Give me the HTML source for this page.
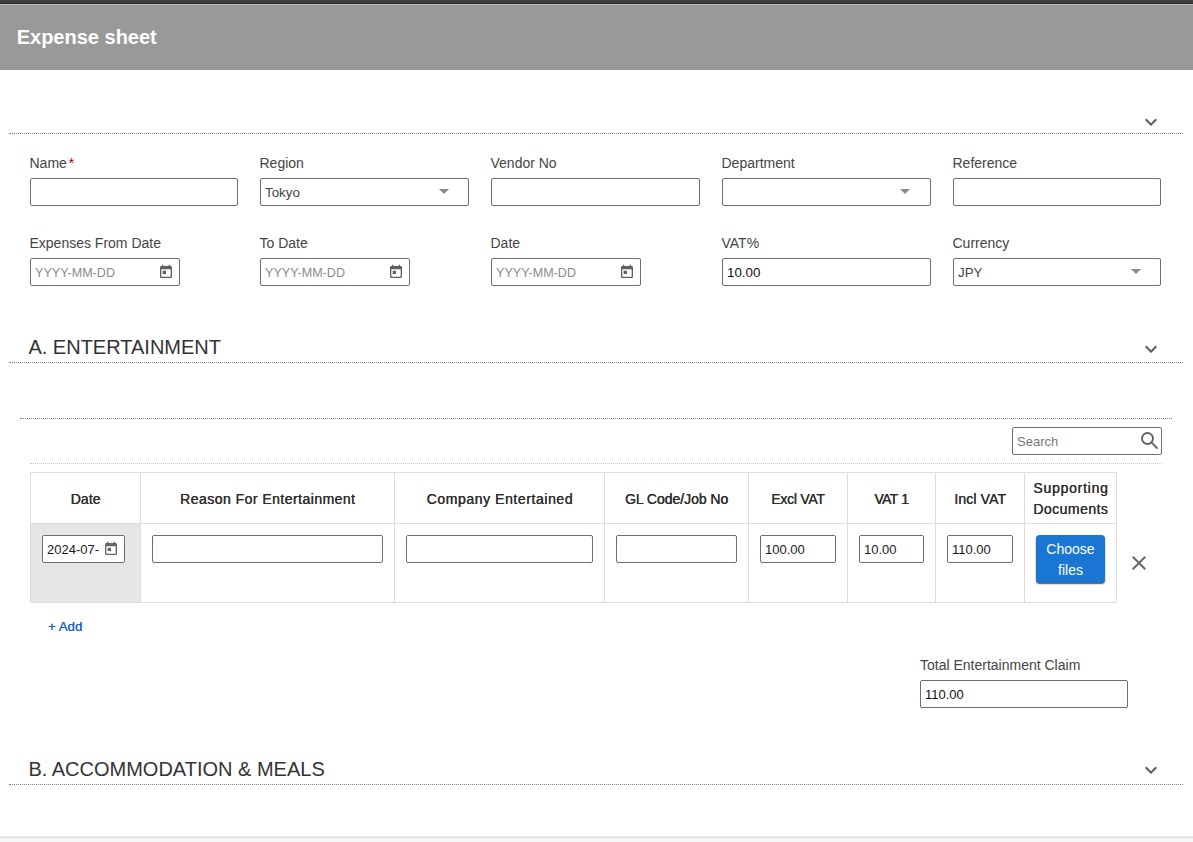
<!DOCTYPE html>
<html lang="en">
<head>
<meta charset="utf-8">
<title>Expense sheet</title>
<style>
*{box-sizing:border-box;}
html,body{margin:0;padding:0;}
body{width:1193px;height:842px;overflow:hidden;background:#fff;font-family:"Liberation Sans",sans-serif;font-size:14px;color:#444;position:relative;}
.topbar{position:absolute;left:0;top:0;width:1193px;height:5px;background:linear-gradient(#3f3f3f 0,#3f3f3f 2px,#3a3a3a 3px,#2a2a2a 3px,#2a2a2a 4px,#bdbdbd 4px,#bdbdbd 5px);}
.header{position:absolute;left:0;top:5px;width:1193px;height:65px;background:#999;}
.header h1{margin:0;position:absolute;left:16.7px;top:20px;font-size:20px;line-height:24px;font-weight:bold;color:#fff;white-space:nowrap;}
.sec{position:absolute;left:9px;width:1174px;border-bottom:1px dotted #7d7d7d;}
.sec h2{margin:0;position:absolute;left:19.4px;font-size:20px;line-height:24px;font-weight:normal;color:#333;white-space:nowrap;}
.chev{position:absolute;width:24px;height:24px;left:1139px;fill:#5a5a5a;}
.form{position:absolute;left:19px;top:153px;width:1153px;display:flex;flex-wrap:wrap;}
.fld{width:231px;padding:0 11px;height:80px;position:relative;}
.fld.n{width:230px;}
.fld label{display:block;height:25px;line-height:20px;font-size:14px;color:#444;white-space:nowrap;margin-left:-.5px;}
.fld label .req{color:#b80000;margin-left:2px;}
.inp{display:block;width:100%;height:28px;border:1px solid #6e6e6e;border-radius:2px;background:#fff;font-family:"Liberation Sans",sans-serif;font-size:13.3333px;color:#444;padding:1px 4px 0 4px;line-height:25px;margin:0;outline:none;}
.inp.date{width:150px;font-size:12.6px;padding:2px 24px 0 4px;}
.inp.date::placeholder{color:#8c8c8c;opacity:1;}
.search input::placeholder{color:#777;opacity:1;}
.sel{position:relative;}
.sel.d:after{right:20.6px;}
.sel select{-webkit-appearance:none;appearance:none;padding:0 4px;line-height:normal;}
.sel:after{content:"";position:absolute;right:20px;top:11px;pointer-events:none;border-left:5px solid transparent;border-right:5px solid transparent;border-top:5px solid #8a8a8a;}
.cal{position:absolute;width:16px;height:16px;fill:#5f5f5f;}
.fld .cal{left:139px;top:31px;}
.line2{position:absolute;left:20px;top:418px;width:1152px;border-bottom:1px dotted #7d7d7d;height:1px;}
.line3{position:absolute;left:30px;top:463px;width:1132px;border-bottom:1px dotted #c4c4c4;height:1px;}
.search{position:absolute;left:1012px;top:427px;width:150px;height:28px;border:1px solid #6e6e6e;border-radius:2px;background:#fff;}
.search input{border:0;background:transparent;outline:none;width:120px;height:26px;padding:0 0 0 4px;font-family:"Liberation Sans",sans-serif;font-size:13px;color:#777;}
.search svg{position:absolute;left:0;top:0;}
table.grid{position:absolute;left:30px;top:472px;border-collapse:collapse;table-layout:fixed;width:1087px;font-family:"Liberation Sans",sans-serif;}
table.grid th,table.grid td{border:1px solid #ddd;padding:0;}
table.grid th{height:51px;font-size:14px;line-height:21px;font-weight:normal;color:#2d2d2d;text-shadow:.32px 0 0 #2d2d2d;text-align:center;vertical-align:top;padding:16px 0 0 0;}
table.grid th.two{padding-top:5px;}
table.grid td{height:79px;vertical-align:top;padding:11px 11px 0 11px;position:relative;}
table.grid td.first{background:#e6e6e6;}
table.grid td .inp{font-size:13px;color:#1a1a1a;padding:0 4px;}
table.grid td div.inp{padding:1px 0 0 4px;line-height:26px;}
table.grid td .cal{left:72px;top:17px;fill:#666;}
.btn{display:block;width:69px;height:48px;margin:0;border:0;border-radius:4px;background:#1976d2;color:#fff;font-family:"Liberation Sans",sans-serif;font-size:14px;line-height:21px;text-align:center;padding:2px 0 0 0;box-shadow:0 1px 1.5px rgba(0,0,0,.5),0 1px 1px rgba(0,0,0,.3);}
.close{position:absolute;left:1127px;top:551px;width:24px;height:24px;fill:#666;}
.add{position:absolute;left:48px;top:618px;font-size:13px;line-height:18px;font-weight:normal;text-shadow:.25px 0 0 #1a66c9;color:#1a66c9;letter-spacing:.15px;text-decoration:none;white-space:nowrap;}
.total{position:absolute;left:920px;top:655px;width:208px;}
.total label{display:block;height:25px;line-height:20px;font-size:14px;color:#444;white-space:nowrap;}
.total .inp{font-size:13px;color:#111;}
.foot{position:absolute;left:0;top:836px;width:1193px;height:6px;background:linear-gradient(#ebebeb 0,#ebebeb 1px,#e0e0e0 1px,#e0e0e0 2px,#f6f6f6 2px,#f6f6f6 6px);}
</style>
</head>
<body>
<div class="topbar"></div>
<div class="header"><h1>Expense sheet</h1></div>

<div class="sec" style="top:100px;height:34px;"></div>
<svg class="chev" style="top:110px" viewBox="0 0 24 24"><path d="M16.59 8.59L12 13.17 7.41 8.59 6 10l6 6 6-6z"/></svg>

<form class="form" onsubmit="return false">
  <div class="fld n"><label>Name<span class="req">*</span></label><input class="inp" type="text" value=""></div>
  <div class="fld"><label>Region</label><div class="sel"><select class="inp"><option selected>Tokyo</option><option>Osaka</option></select></div></div>
  <div class="fld"><label>Vendor No</label><input class="inp" type="text" value=""></div>
  <div class="fld"><label>Department</label><div class="sel d"><select class="inp"><option selected></option></select></div></div>
  <div class="fld n"><label>Reference</label><input class="inp" type="text" value=""></div>
  <div class="fld n"><label>Expenses From Date</label><input class="inp date" type="text" placeholder="YYYY-MM-DD"><svg class="cal" viewBox="0 0 24 24"><path d="M19 3h-1V1h-2v2H8V1H6v2H5c-1.11 0-1.99.9-1.99 2L3 19c0 1.1.89 2 2 2h14c1.1 0 2-.9 2-2V5c0-1.1-.9-2-2-2zm0 16H5V8h14v11zM7 10h5v5H7z"/></svg></div>
  <div class="fld"><label>To Date</label><input class="inp date" type="text" placeholder="YYYY-MM-DD"><svg class="cal" viewBox="0 0 24 24"><path d="M19 3h-1V1h-2v2H8V1H6v2H5c-1.11 0-1.99.9-1.99 2L3 19c0 1.1.89 2 2 2h14c1.1 0 2-.9 2-2V5c0-1.1-.9-2-2-2zm0 16H5V8h14v11zM7 10h5v5H7z"/></svg></div>
  <div class="fld"><label>Date</label><input class="inp date" type="text" placeholder="YYYY-MM-DD"><svg class="cal" viewBox="0 0 24 24"><path d="M19 3h-1V1h-2v2H8V1H6v2H5c-1.11 0-1.99.9-1.99 2L3 19c0 1.1.89 2 2 2h14c1.1 0 2-.9 2-2V5c0-1.1-.9-2-2-2zm0 16H5V8h14v11zM7 10h5v5H7z"/></svg></div>
  <div class="fld"><label>VAT%</label><input class="inp" type="text" value="10.00" style="color:#111"></div>
  <div class="fld n"><label>Currency</label><div class="sel"><select class="inp"><option selected>JPY</option><option>USD</option></select></div></div>
</form>

<div class="sec" style="top:330px;height:33px;"><h2 style="top:5px">A. ENTERTAINMENT</h2></div>
<svg class="chev" style="top:337px" viewBox="0 0 24 24"><path d="M16.59 8.59L12 13.17 7.41 8.59 6 10l6 6 6-6z"/></svg>

<div class="line2"></div>
<div class="search"><input type="text" placeholder="Search"><svg width="148" height="26" viewBox="1013 428 148 26"><circle cx="1147.5" cy="438.5" r="5.5" fill="none" stroke="#626262" stroke-width="1.9"/><path d="M1151.6 442.6L1157.6 448.6" stroke="#626262" stroke-width="2" fill="none"/></svg></div>
<div class="line3"></div>

<table class="grid">
  <colgroup><col style="width:110px"><col style="width:254px"><col style="width:210px"><col style="width:144px"><col style="width:99px"><col style="width:88px"><col style="width:89px"><col style="width:92px"></colgroup>
  <thead><tr>
    <th><span style="letter-spacing:0.07px;margin-left:0.07px">Date</span></th><th><span style="letter-spacing:0.465px;margin-left:0.465px">Reason For Entertainment</span></th><th><span style="letter-spacing:0.58px;margin-left:0.58px">Company Entertained</span></th><th><span style="letter-spacing:-0.04px;margin-left:-0.04px">GL Code/Job No</span></th><th><span style="letter-spacing:-0.27px;margin-left:-0.27px">Excl VAT</span></th><th><span style="letter-spacing:-0.75px;word-spacing:1px;margin-left:-0.5px">VAT 1</span></th><th><span style="letter-spacing:0.13px;margin-left:0.13px">Incl VAT</span></th><th class="two"><span style="letter-spacing:0.75px;margin-left:0.75px">Supporting</span><br><span style="letter-spacing:0.47px;margin-left:0.47px">Documents</span></th>
  </tr></thead>
  <tbody><tr>
    <td class="first"><input class="inp" type="text" value="2024-07-" style="width:83px;padding:0 24px 0 4px"><svg class="cal" viewBox="0 0 24 24"><path d="M19 3h-1V1h-2v2H8V1H6v2H5c-1.11 0-1.99.9-1.99 2L3 19c0 1.1.89 2 2 2h14c1.1 0 2-.9 2-2V5c0-1.1-.9-2-2-2zm0 16H5V8h14v11zM7 10h5v5H7z"/></svg></td>
    <td><input class="inp" type="text" value=""></td>
    <td><input class="inp" type="text" value=""></td>
    <td><input class="inp" type="text" value=""></td>
    <td><input class="inp" type="text" value="100.00"></td>
    <td><input class="inp" type="text" value="10.00"></td>
    <td><input class="inp" type="text" value="110.00"></td>
    <td><button class="btn" type="button">Choose<br>files</button></td>
  </tr></tbody>
</table>
<svg class="close" viewBox="0 0 24 24"><path d="M19 6.41L17.59 5 12 10.59 6.41 5 5 6.41 10.59 12 5 17.59 6.41 19 12 13.41 17.59 19 19 17.59 13.41 12z"/></svg>

<a class="add">+ Add</a>

<div class="total"><label>Total Entertainment Claim</label><input class="inp" type="text" value="110.00"></div>

<div class="sec" style="top:752px;height:33px;"><h2 style="top:5px">B. ACCOMMODATION &amp; MEALS</h2></div>
<svg class="chev" style="top:758px" viewBox="0 0 24 24"><path d="M16.59 8.59L12 13.17 7.41 8.59 6 10l6 6 6-6z"/></svg>

<div class="foot"></div>
</body>
</html>
